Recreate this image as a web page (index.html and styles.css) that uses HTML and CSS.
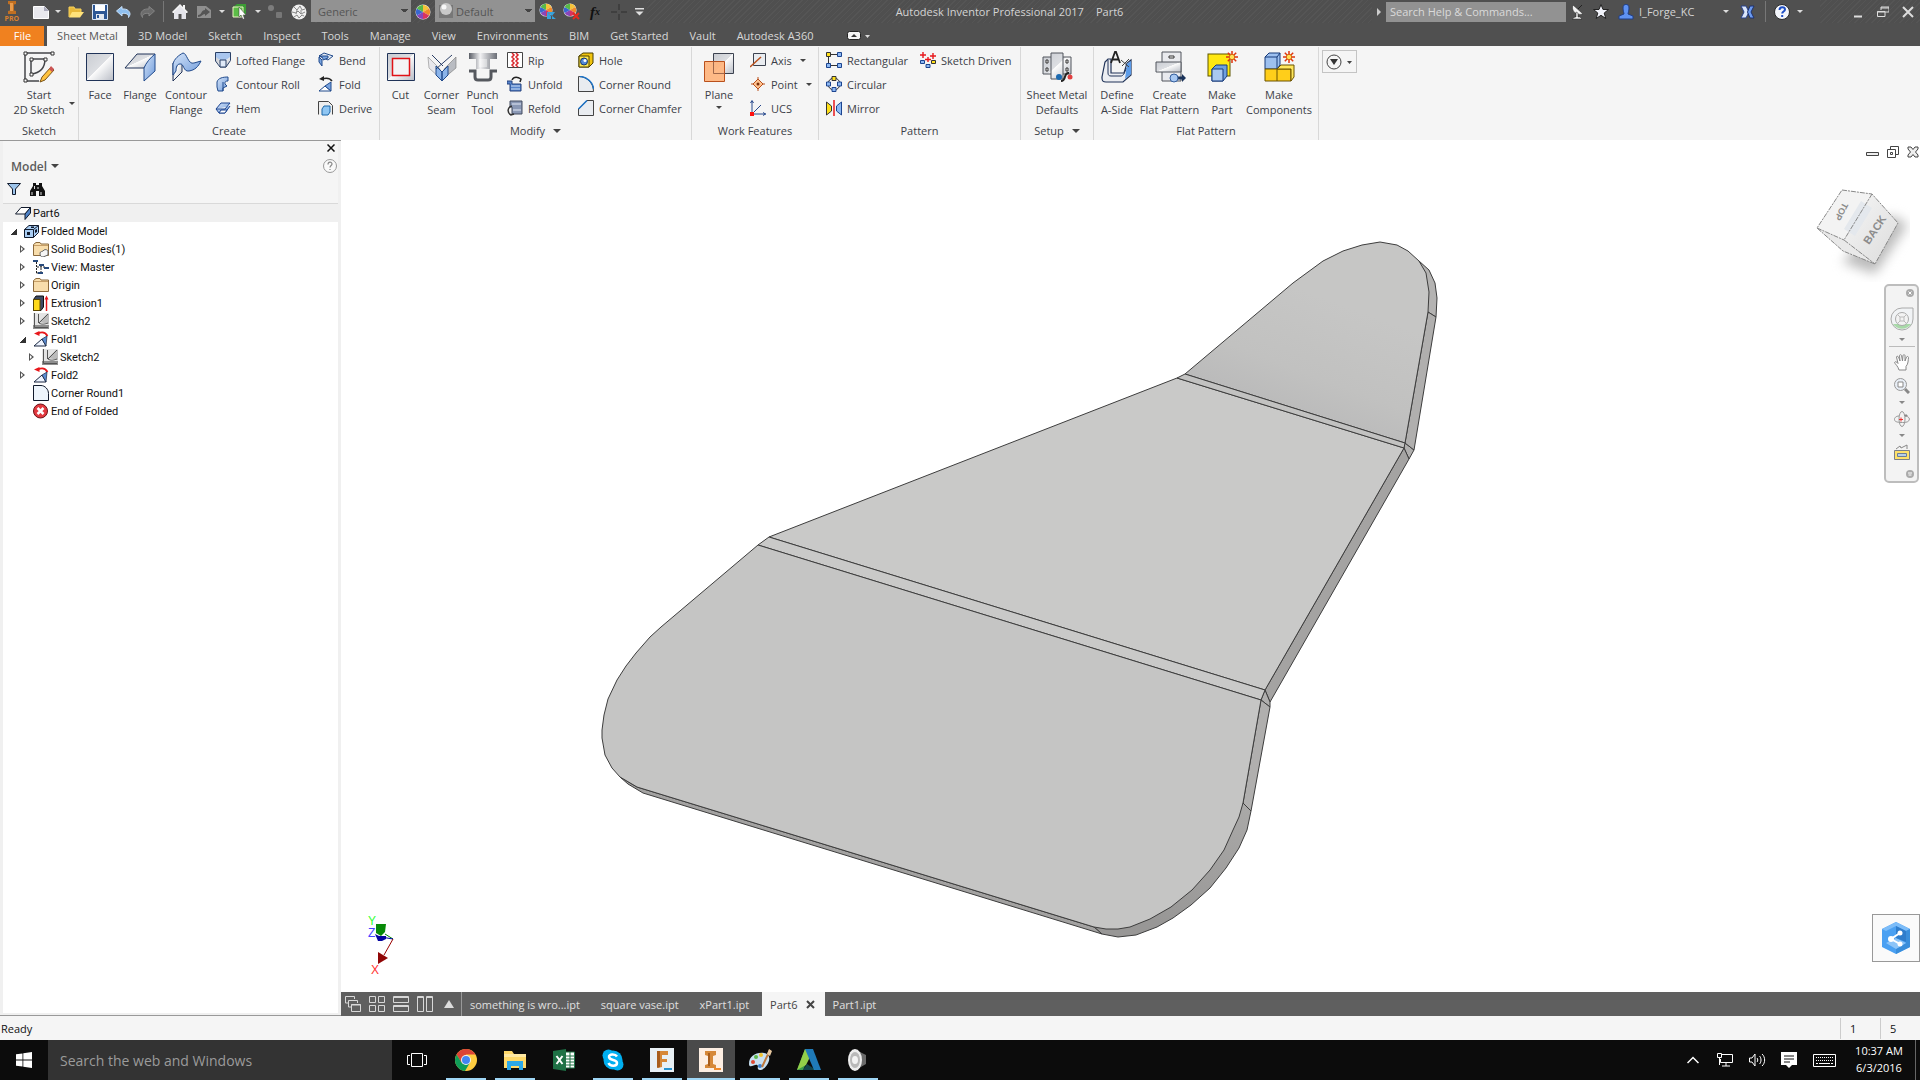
FILE: index.html
```
<!DOCTYPE html>
<html lang="en">
<head>
    <meta charset="UTF-8">
    <meta name="viewport" content="width=device-width, initial-scale=1">
    <title>Autodesk Inventor Professional 2017</title>
    <link rel="stylesheet" href="styles.css">
</head>
<body>

<!-- shared icons -->
<svg class="sprite" aria-hidden="true">
    <defs>
        <linearGradient id="g-steel" x1="0" y1="0" x2="1" y2="1">
            <stop offset="0" stop-color="#c9ccd2"/><stop offset=".48" stop-color="#dcdee2"/><stop offset=".5" stop-color="#fbfbfb"/><stop offset="1" stop-color="#b9bdc6"/>
        </linearGradient>
        <linearGradient id="g-blue" x1="0" y1="0" x2="1" y2="1">
            <stop offset="0" stop-color="#d5e4f8"/><stop offset="1" stop-color="#6f9bdb"/>
        </linearGradient>
        <linearGradient id="g-punch" x1="0" y1="0" x2="1" y2="0">
            <stop offset="0" stop-color="#5a5e66"/><stop offset=".4" stop-color="#f2f2f4"/><stop offset="1" stop-color="#6a6e76"/>
        </linearGradient>
        <linearGradient id="g-cube" x1="0" y1="0" x2="1" y2="1">
            <stop offset="0" stop-color="#f6f6f6"/><stop offset="1" stop-color="#dcdcdc"/>
        </linearGradient>
    </defs>
    <symbol id="i-wheel" viewBox="0 0 16 16">
        <circle cx="8" cy="8" r="7.5" fill="#eee"/>
        <path d="M8 8V1a7 7 0 0 1 6.1 3.5z" fill="#f6c33a"/><path d="M8 8l6.1-3.5a7 7 0 0 1 0 7z" fill="#f08a2a"/>
        <path d="M8 8l6.1 3.5A7 7 0 0 1 8 15z" fill="#d8345f"/><path d="M8 8v7a7 7 0 0 1-6.1-3.5z" fill="#8a45b8"/>
        <path d="M8 8l-6.100 3.500a7 7 0 0 1 0-7z" fill="#3867d0"/><path d="M8 8L1.900 4.500A7 7 0 0 1 8 1z" fill="#58b848"/>
    </symbol>
    <symbol id="i-foldred" viewBox="0 0 16 16">
        <path d="M14.500 5C12 .5 8 1 5 2.500" fill="none" stroke="#e8171b" stroke-width="1.800"/><path d="M1 2.500L6.500 0v5z" fill="#e8171b"/>
        <path d="M1 15h12L9 8z" fill="#eef4ff" stroke="#1a2740"/><path d="M9 8l5-3-1 10z" fill="#5a8bd0" stroke="#1a2740" stroke-width=".7"/>
    </symbol>
    <symbol id="i-sketch" viewBox="0 0 16 16">
        <path d="M0 12h16v4H0z" fill="#8f8f8f"/><path d="M0 0h16v12H0z" fill="#e4e4e4"/><path d="M6 9l8-8h2v10z" fill="#bbb"/>
        <path d="M1.500 0v14.500H15M5.500 1v9M15 1L6 10c3 2 6 1 9 0" fill="none" stroke="#555"/>
    </symbol>
    <symbol id="i-folder" viewBox="0 0 16 16">
        <path d="M.5 14.500V3.500L3 1.500h4l1 1.500h7.500v11.500z" fill="#f8ddab" stroke="#8c6a3c"/><path d="M1 4.500h14" stroke="#c79f68"/>
    </symbol>
    <symbol id="i-part" viewBox="0 0 32 32">
        <rect x="2" y="3" width="22" height="22" fill="#ffe711" stroke="#5e5600"/>
    </symbol>
    <symbol id="i-spark" viewBox="0 0 12 12">
        <path d="M6 0v12M0 6h12M1.800 1.800l8.400 8.400M10.200 1.800l-8.400 8.400" stroke="#e0350f" stroke-width="1.500"/><circle cx="6" cy="6" r="2.700" fill="#ffe25a" stroke="#d8650f"/>
    </symbol>
</svg>

<header class="titlebar">
    <div class="quick">
        <button class="app-menu" aria-label="Application menu">
            <svg width="12" height="13" viewBox="0 0 12 13"><path d="M2 0h8v3l-2 .5v6l2 .5v3H2v-3l2-.5v-6L2 3z" fill="#c06f22"/><path d="M4 2h3v8H4z" fill="#e89a4a"/></svg>
            <span>PRO</span>
        </button>
        <button aria-label="New"><svg width="16" height="14" viewBox="0 0 16 14"><path d="M.5 1.500h11L15.500 6v7.500H.5z" fill="#e9e9ee" stroke="#fff"/><path d="M11 1v5h5z" fill="#aab"/></svg></button>
        <button class="caret" aria-label="New options"></button>
        <button aria-label="Open"><svg width="16" height="14" viewBox="0 0 16 14"><path d="M1 12V2h5l1 2h6v3" fill="#e8b93a" stroke="#f7d25a"/><path d="M1 12.500L4 7h12l-4 5.500z" fill="#ffe27a"/></svg></button>
        <button aria-label="Save"><svg width="16" height="16" viewBox="0 0 16 16"><path d="M.5.5h15v15H.5z" fill="#2d5795" stroke="#d9e6f7"/><path d="M3 1h10v6H3z" fill="#fff"/><path d="M4 10h8v5H4z" fill="#e3e8f0"/><path d="M5 11h2v3H5z" fill="#2d5795"/></svg></button>
        <button aria-label="Undo"><svg width="15" height="12" viewBox="0 0 15 12"><path d="M.5 5L6 .5V3c6-.5 8 3 8 5 0 1-.5 2-1.500 3.500C13 8 10 7 6 7.500V10z" fill="#8fc0f0" stroke="#c7e0fa"/></svg></button>
        <button aria-label="Redo"><svg width="15" height="12" viewBox="0 0 15 12"><path d="M14.500 5L9 .5V3C3 2.500 1 6 1 8c0 1 .5 2 1.500 3.500C2 8 5 7 9 7.500V10z" fill="#6c6c6c" stroke="#858585"/></svg></button>
        <i class="rule"></i>
        <button aria-label="Home"><svg width="16" height="15" viewBox="0 0 16 15"><path d="M0 8L8 0l3 3V1h2v4l3 3-1 1H1z" fill="#f4f4f4"/><path d="M2 8l6-6 6 6v7H9.500v-5h-3v5H2z" fill="#e4e4ea"/></svg></button>
        <button aria-label="Update"><svg width="16" height="14" viewBox="0 0 16 14"><path d="M1 1h9l5 4v8H1z" fill="#8f8f8f"/><path d="M2 10c4 0 3-5 7-5V3l5 4-5 4V9c-3 0-3 3-7 3z" fill="#555"/></svg></button>
        <button class="caret" aria-label="Update options"></button>
        <button aria-label="Select"><svg width="15" height="17" viewBox="0 0 15 17"><path d="M1 4l4-3h9v10l-3 3H1z" fill="#3c9c35"/><path d="M1 4h10v10H1z" fill="#5cbc47" stroke="#f0f3c6"/><path d="M7 4v10l2-2 2 4.500 1.500-1L11 12h3z" fill="#fff" stroke="#333" stroke-width=".5"/></svg></button>
        <button class="caret" aria-label="Select options"></button>
        <button aria-label="Return"><svg width="16" height="16" viewBox="0 0 16 16"><circle cx="4" cy="4" r="3" fill="#7d7d7d"/><rect x="9" y="8" width="6" height="6" rx="1" fill="#777"/></svg></button>
        <button aria-label="Material browser"><svg width="16" height="16" viewBox="0 0 16 16"><circle cx="8" cy="8" r="7.500" fill="#f0f0f0"/><path d="M3 3l3 3 3-4 2 4 3-1M1 8l4 1 2-2 3 3 4-2M3 13l3-2 2 3 3-3 2 1M6 6l-1 4M10 6v4" fill="none" stroke="#888"/></svg></button>
    </div>
    <select class="dark-select" aria-label="Material"><option>Generic</option></select>
    <button class="plain" aria-label="Appearance"><svg width="16" height="16"><use href="#i-wheel"/></svg></button>
    <span class="select-wrap">
        <svg width="15" height="15" viewBox="0 0 15 15"><path d="M0 2h14v13H0z" fill="#777"/><circle cx="7" cy="6" r="6" fill="#c8c8c8"/><circle cx="5" cy="4" r="2.500" fill="#f7f7f7"/></svg>
        <select class="dark-select has-ball" aria-label="Appearance override"><option>Default</option></select>
    </span>
    <div class="quick-end">
        <button aria-label="Adjust appearance"><svg width="17" height="17" viewBox="0 0 17 17"><use href="#i-wheel" width="14" height="14"/><path d="M8 9h8l-3 4v3h4M8 16h4v-3L8 9" fill="#36a3dd"/></svg></button>
        <button aria-label="Clear appearance"><svg width="17" height="17" viewBox="0 0 17 17"><use href="#i-wheel" width="14" height="14"/><path d="M10 10l6 6M16 10l-6 6" stroke="#e62b1e" stroke-width="2"/></svg></button>
        <button class="fx" aria-label="Parameters">f<sub>x</sub></button>
        <button aria-label="Center"><svg width="16" height="16" viewBox="0 0 16 16"><path d="M8 0v6M8 10v6M0 8h6M10 8h6" stroke="#3a3a3a" stroke-width="1.500"/></svg></button>
        <button class="customize" aria-label="Customize toolbar"><svg width="9" height="8" viewBox="0 0 9 8"><path d="M0 0h9v1.500H0zM.5 3.500h8l-4 4z" fill="#e0e0e0"/></svg></button>
    </div>
    <div class="caption"><span>Autodesk Inventor Professional 2017</span><span>Part6</span></div>
    <div class="infocenter">
        <button class="expand" aria-label="Hide search"><svg width="4" height="8" viewBox="0 0 4 8"><path d="M0 0l4 4-4 4z" fill="#ccc"/></svg></button>
        <input type="text" aria-label="Search help" placeholder="Search Help &amp; Commands...">
        <button aria-label="Communication center"><svg width="13" height="16" viewBox="0 0 13 16"><path d="M2 1C0 6 4 12 12 10z" fill="#f2f2f2" stroke="#222" stroke-width=".5"/><path d="M7 5l4-4" stroke="#222"/><path d="M1 15h10l-2-2H7V9L5 8v5H4z" fill="#f2f2f2" stroke="#222" stroke-width=".5"/></svg></button>
        <button aria-label="Favorites"><svg width="16" height="16" viewBox="0 0 16 16"><path d="M8 .5l2 5h5.500l-4.300 3.500 1.600 5.500L8 11.300l-4.800 3.200 1.600-5.500L.5 5.500H6z" fill="#f1f3fa" stroke="#222"/></svg></button>
        <button class="account"><svg width="16" height="16" viewBox="0 0 16 16"><path d="M5 4c0-5 6-5 6 0 0 3-1 5-1 6l5 2v3H1v-3l5-2C6 9 5 7 5 4z" fill="#5f92f2" stroke="#203e85"/></svg><span>I_Forge_KC</span></button>
        <button class="caret" aria-label="Account menu"></button>
        <button class="exchange" aria-label="Exchange"><svg width="15" height="14" viewBox="0 0 15 14"><path d="M1 1h5l3 6-3 6H1l3-6z" fill="#dbe6fa" stroke="#27408a"/><path d="M14 1h-4L7.500 7l2.500 6h4l-3-6z" fill="#6c9bf0" stroke="#1c3170"/></svg></button>
        <i class="rule"></i>
        <button aria-label="Help"><svg width="16" height="16" viewBox="0 0 16 16"><circle cx="8" cy="8" r="7.500" fill="#f4f6fb" stroke="#2b2b2b"/><path d="M5.500 6c0-4 5.500-3.500 5.500-.5C11 7.500 8.200 7.500 8.200 9.500" fill="none" stroke="#1e4ec4" stroke-width="2"/><path d="M7.200 11h2v2h-2z" fill="#1e4ec4"/></svg></button>
        <button class="caret" aria-label="Help menu"></button>
    </div>
    <div class="window-buttons">
        <button aria-label="Minimize"><svg width="12" height="12" viewBox="0 0 12 12"><path d="M2 10.500h8" stroke="#ddd" stroke-width="2"/></svg></button>
        <button aria-label="Restore"><svg width="12" height="12" viewBox="0 0 12 12"><path d="M4 4V1h8v5H8M4 2h8M.5 5.500h7.500v5H.5zM0 6h8" stroke="#ddd" fill="none"/></svg></button>
        <button aria-label="Close"><svg width="12" height="12" viewBox="0 0 12 12"><path d="M1 1l10 10M11 1L1 11" stroke="#ddd" stroke-width="2"/></svg></button>
    </div>
</header>

<nav class="tabs">
    <button class="tab file">File</button>
    <button class="tab active">Sheet Metal</button>
    <button class="tab">3D Model</button>
    <button class="tab">Sketch</button>
    <button class="tab">Inspect</button>
    <button class="tab">Tools</button>
    <button class="tab">Manage</button>
    <button class="tab">View</button>
    <button class="tab">Environments</button>
    <button class="tab">BIM</button>
    <button class="tab">Get Started</button>
    <button class="tab">Vault</button>
    <button class="tab">Autodesk A360</button>
    <button class="collapse" aria-label="Collapse ribbon"><svg width="24" height="10" viewBox="0 0 24 10"><rect x=".5" y=".5" width="13" height="8" rx="2" fill="#f2f2f2" stroke="#222"/><path d="M4 6l3-3 3 3z" fill="#333"/><path d="M18 4h5l-2.500 3z" fill="#ddd"/></svg></button>
</nav>

<section class="ribbon">
    <div class="panel p-sketch">
        <div class="panel-body">
            <button class="big">
                <svg width="32" height="32" viewBox="0 0 32 32"><path d="M2 2h28M2 2v28h14M8 8h14M8 8v15M22 8c0 9-5 14-14 15" fill="none" stroke="#44464a" stroke-width="1.500"/><path d="M1 1h3v3H1zM28 1h3v3h-3zM1 28h3v3H1zM7 7h3v3H7zM21 7h3v3h-3zM7 22h3v3H7z" fill="#fff" stroke="#333"/><path d="M17 31l2-5 9-10 3 3-9 10z" fill="#ffc23d" stroke="#7a5418"/><path d="M26 18l2-3 3 3-2 3z" fill="#c55"/></svg>
                <span>Start<br>2D Sketch</span>
            </button>
            <i class="down side"></i>
        </div>
        <h2>Sketch</h2>
    </div>
    <div class="panel p-create">
        <div class="panel-body">
            <button class="big"><svg width="32" height="32" viewBox="0 0 32 32"><path d="M2.500 2.500h27v27h-27z" fill="url(#g-steel)" stroke="#203358"/></svg><span>Face</span></button>
            <button class="big"><svg width="32" height="32" viewBox="0 0 32 32"><path d="M1 17L13 3h18L20 17z" fill="url(#g-steel)" stroke="#203358"/><path d="M20 17c2-5 6-10 11-14v17L20 30z" fill="url(#g-blue)" stroke="#204a8c"/></svg><span>Flange</span></button>
            <button class="big wide"><svg width="32" height="32" viewBox="0 0 32 32"><path d="M3 12l9-9v18L3 30z" fill="url(#g-steel)" stroke="#203358"/><path d="M3 13C4 8 9 4 13 2c4 0 5 12 11 10l7-2c-3 6-6 9-12 10-6 1-5-8-9-7-3 0-4 3-4 7l-3 4z" fill="url(#g-blue)" stroke="#204a8c"/></svg><span>Contour<br>Flange</span></button>
            <div class="col c-create1">
                <button class="small"><svg width="16" height="16" viewBox="0 0 16 16"><path d="M.5.5h15v8L11 15H5L.5 9z" fill="url(#g-steel)" stroke="#2a4067"/><path d="M1 1h14v4l-4 3H5L1 5z" fill="#a9c6ef"/><path d="M5 8h6v7H5z" fill="#dfe9f7" stroke="#2a4067"/></svg>Lofted Flange</button>
                <button class="small"><svg width="16" height="16" viewBox="0 0 16 16"><path d="M2 6C3 2 8 1 13 1v4c-3 0-3 1-3 3l2 2-4 2v3H3l-1-4z" fill="url(#g-blue)" stroke="#204a8c"/><path d="M8 6v9" stroke="#204a8c"/></svg>Contour Roll</button>
                <button class="small"><svg width="16" height="16" viewBox="0 0 16 16"><path d="M1 9l5-6h9l-5 6zM1 9l3 4h6l5-7" fill="url(#g-blue)" stroke="#1c4490"/><path d="M4 13h6l2-3H6z" fill="#fff" stroke="#1c4490"/></svg>Hem</button>
            </div>
            <div class="col">
                <button class="small"><svg width="16" height="16" viewBox="0 0 16 16"><path d="M1 4l5-3 9 3-5 4z" fill="#e6ecf5" stroke="#204a8c"/><path d="M1 4c3 0 4 2 4 4l5-2V4zM1 5v5l3 4V8z" fill="#78a3df" stroke="#204a8c"/></svg>Bend</button>
                <button class="small"><svg width="16" height="16" viewBox="0 0 16 16"><path d="M14 5C11 1 7 2 4 3" fill="none" stroke="#222" stroke-width="1.500"/><path d="M1 3l5-3v5z" fill="#222"/><path d="M1 15h12L7 10z" fill="#fff" stroke="#204a8c"/><path d="M7 10l6-4v9z" fill="#78a3df" stroke="#204a8c"/></svg>Fold</button>
                <button class="small"><svg width="16" height="16" viewBox="0 0 16 16"><path d="M.5 14.500V1.500h10l4 4v9" fill="#eee" stroke="#444"/><path d="M4 9l2-3h6v6l-2 3H4z" fill="#8fc6f3" stroke="#1b66a8"/></svg>Derive</button>
            </div>
        </div>
        <h2>Create</h2>
    </div>
    <div class="panel p-modify">
        <div class="panel-body">
            <button class="big"><svg width="32" height="32" viewBox="0 0 32 32"><path d="M2.500 2.500h27v27h-27z" fill="url(#g-steel)" stroke="#203358"/><path d="M7.500 7.500h17v17h-17z" fill="#f4f4f6" stroke="#e01217" stroke-width="1.500"/></svg><span>Cut</span></button>
            <button class="big"><svg width="32" height="32" viewBox="0 0 32 32"><path d="M2 6l12 12v9L3 17z" fill="#e8e8ec" stroke="#888" stroke-width=".6"/><path d="M30 6L18 18v9l12-10z" fill="#b9bcc2" stroke="#777" stroke-width=".6"/><path d="M10 15l6 6v9l-6-6zM22 15l-6 6v9l6-6z" fill="#8bb4ea" stroke="#204a8c"/><path d="M6 4l11 11M26 4L10 18" stroke="#2b3f66"/></svg><span>Corner<br>Seam</span></button>
            <button class="big"><svg width="32" height="32" viewBox="0 0 32 32"><path d="M2 2h28v6H2zM9 8h14v10H9z" fill="url(#g-punch)"/><path d="M12 8h8v8h-8z" fill="#fff" opacity=".4"/><path d="M2 20h6v6c0 2 1 3 3 3h10c2 0 3-1 3-3v-6h6" fill="none" stroke="#55585e" stroke-width="3"/></svg><span>Punch<br>Tool</span></button>
            <div class="col c-modify1">
                <button class="small"><svg width="16" height="16" viewBox="0 0 16 16"><path d="M.5.5h15v15H.5z" fill="#fff" stroke="#444"/><path d="M5 1l2 2-2 2 2 2-2 2 2 2-2 2 2 2M9 1l2 2-2 2 2 2-2 2 2 2-2 2 2 2" fill="none" stroke="#d9252a" stroke-width="1.500"/></svg>Rip</button>
                <button class="small"><svg width="16" height="16" viewBox="0 0 16 16"><path d="M0 5h5v3h9v7H3V8H0z" fill="#5583cb" stroke="#26437e"/><path d="M4 10h9M4 13h9" stroke="#d0e0f6"/><path d="M5 4c2-4 6-3 9-1l-1 3" fill="none" stroke="#222" stroke-width="1.500"/></svg>Unfold</button>
                <button class="small"><svg width="16" height="16" viewBox="0 0 16 16"><path d="M3 1h12v13H5V7H3z" fill="#8a98b5" stroke="#444c60"/><path d="M5 4h9M6 10h8" stroke="#e2e8f5"/><path d="M5 6C0 7 0 13 4 15l3-1" fill="none" stroke="#333" stroke-width="1.500"/></svg>Refold</button>
            </div>
            <div class="col">
                <button class="small"><svg width="16" height="16" viewBox="0 0 16 16"><path d="M1 4l4-3h10v10l-4 4H1z" fill="#f1c40f" stroke="#4c4100"/><path d="M1 4h10v11H1z" fill="#ffe84d" stroke="#4c4100"/><circle cx="6" cy="9.500" r="3.500" fill="#5389d6" stroke="#16356e"/><circle cx="7" cy="8.500" r="1.500" fill="#fff"/></svg>Hole</button>
                <button class="small"><svg width="16" height="16" viewBox="0 0 16 16"><path d="M.5.5C9 .5 15.500 7 15.500 15.500H.5z" fill="#e9ecf0" stroke="#444"/><path d="M2 .5C9 .5 15.500 7 15.500 13" fill="none" stroke="#1d74c8" stroke-width="1.500"/></svg>Corner Round</button>
                <button class="small"><svg width="16" height="16" viewBox="0 0 16 16"><path d="M.5 15.500V9L9 .5h6.500v15z" fill="#e9ecf0" stroke="#444"/><path d="M.5 9L9 .5" stroke="#1d74c8" stroke-width="1.500"/></svg>Corner Chamfer</button>
            </div>
        </div>
        <h2>Modify <i class="down"></i></h2>
    </div>
    <div class="panel p-work">
        <div class="panel-body">
            <button class="big"><svg width="32" height="32" viewBox="0 0 32 32"><path d="M10.500 2.500h20v20h-20z" fill="url(#g-steel)" stroke="#3c4250"/><path d="M1.500 10.500h20v20h-20z" fill="#ffb37a" fill-opacity=".9" stroke="#b9501c"/><path d="M10.500 10.500v12h11" fill="none" stroke="#a0674a"/></svg><span>Plane</span><i class="down"></i></button>
            <div class="col">
                <button class="small"><svg width="16" height="16" viewBox="0 0 16 16"><path d="M3.500 1.500h12v12h-12z" fill="#e9ecf0" stroke="#3c4250"/><path d="M0 15L11 5" stroke="#b9501c" stroke-width="1.500"/></svg>Axis<i class="down"></i></button>
                <button class="small"><svg width="16" height="16" viewBox="0 0 16 16"><path d="M8 1v14M1 8h14" stroke="#b9501c"/><path d="M8 3l5 5-5 5-5-5z" fill="#ffc28f" stroke="#b9501c"/><circle cx="8" cy="8" r="1.500" fill="#7a2f0a"/></svg>Point<i class="down"></i></button>
                <button class="small"><svg width="16" height="16" viewBox="0 0 16 16"><path d="M2 1v13h14M2 14L11 5M.5 3L2 .5 3.500 3M13 12.500l2.500 1.500-2.500 1.500" fill="none" stroke="#27488c"/><path d="M0 12h4v4H0z" fill="#f11"/></svg>UCS</button>
            </div>
        </div>
        <h2>Work Features</h2>
    </div>
    <div class="panel p-pattern">
        <div class="panel-body">
            <div class="col c-pattern1">
                <button class="small"><svg width="16" height="16" viewBox="0 0 16 16"><path d="M2.500 4v8M4 2.500h8M4 13.500h8" stroke="#333"/><path d="M.5.5h4v4h-4z" fill="#ffe01a" stroke="#333"/><path d="M11.500.5h4v4h-4zM.5 11.500h4v4h-4zM11.500 11.500h4v4h-4z" fill="#8db8f2" stroke="#1c4490"/></svg>Rectangular</button>
                <button class="small"><svg width="16" height="16" viewBox="0 0 16 16"><circle cx="8" cy="8" r="6" fill="none" stroke="#333"/><path d="M6 .5h4v4H6z" fill="#ffe01a" stroke="#333"/><path d="M.5 6h4v4h-4zM11.500 6h4v4h-4zM6 11.500h4v4H6z" fill="#8db8f2" stroke="#1c4490"/></svg>Circular</button>
                <button class="small"><svg width="16" height="16" viewBox="0 0 16 16"><path d="M.5 15V2l5 4v5z" fill="#ffe01a" stroke="#333"/><path d="M15.500 15V2l-5 4v5z" fill="#8db8f2" stroke="#1c4490"/><path d="M8 0v16" stroke="#e8171b" stroke-width="1.500"/></svg>Mirror</button>
            </div>
            <div class="col">
                <button class="small"><svg width="16" height="16" viewBox="0 0 16 16"><path d="M3 0v6M0 3h6M13 1v6M10 4h6M8 5v5M5 7.500h6" stroke="#e8171b" stroke-width="1.400"/><path d="M.5 8.500h4v3h-4zM6 12.500h4v3H6z" fill="#8db8f2" stroke="#1c4490"/><path d="M11.500 8.500h4v3h-4z" fill="#ffe01a" stroke="#333"/></svg>Sketch Driven</button>
            </div>
        </div>
        <h2>Pattern</h2>
    </div>
    <div class="panel p-setup">
        <div class="panel-body">
            <button class="big"><svg width="32" height="32" viewBox="0 0 32 32"><path d="M2 6h8V2h12v4h8v17h-8v5H10v-5H2z" fill="url(#g-steel)" stroke="#50545c"/><path d="M10 6v17M22 6v17" stroke="#50545c"/><path d="M5 9h2v3H5zM5 17h2v3H5zM25 9h2v3h-2zM25 17h2v3h-2z" fill="#fff" stroke="#333"/><circle cx="18" cy="26" r="3" fill="#1c6ab0"/><circle cx="29" cy="26" r="2.500" fill="#e24040"/><path d="M20 30c6 0 2-9 8-8" fill="none" stroke="#222" stroke-width="2"/></svg><span>Sheet Metal<br>Defaults</span></button>
        </div>
        <h2>Setup <i class="down"></i></h2>
    </div>
    <div class="panel p-flat">
        <div class="panel-body">
            <button class="big"><svg width="32" height="32" viewBox="0 0 32 32"><path d="M1 26l3-15 3-3h3v14h13l3-10 4-3v15l-8 7H5c-3 0-4-1-4-4z" fill="#eceef2" stroke="#203358" stroke-width="1.200"/><path d="M26 13l4-3v13l-6 5z" fill="#5b9be8"/><path d="M7 9v13c0 2 1 3 3 3h10c2 0 4-3 5-8" fill="none" stroke="#203358"/><path d="M10 12l4-11h1l4 11M12 8.500h6" fill="none" stroke="#222" stroke-width="1.800"/><path d="M20 9l8 7M28 8l-7 7" stroke="#444"/></svg><span>Define<br>A-Side</span></button>
            <button class="big wide"><svg width="32" height="32" viewBox="0 0 32 32"><path d="M8 1h19v29H8z" fill="#e9eaee" stroke="#50545c"/><path d="M2 11h25v10H2z" fill="url(#g-steel)" stroke="#50545c"/><path d="M15 5h5v2h-5z" fill="#fff" stroke="#333"/><path d="M21 27h8" stroke="#1a3259" stroke-width="3"/><path d="M28 23l4 4-4 4z" fill="#1a3259"/><circle cx="20" cy="27" r="4" fill="#a8c8f2" stroke="#355f9e"/></svg><span>Create<br>Flat Pattern</span></button>
            <button class="big"><svg width="32" height="32" viewBox="0 0 32 32"><use href="#i-part"/><path d="M6 18l4-4h11v11l-4 5H6z" fill="#6f9fdf" stroke="#163a7a"/><path d="M6 18h11v12H6z" fill="#a9c8f1" stroke="#163a7a"/><use href="#i-spark" x="20" y="0" width="12" height="12"/></svg><span>Make<br>Part</span></button>
            <button class="big wider"><svg width="32" height="32" viewBox="0 0 32 32"><path d="M2 18V6l4-4h11v12l-3 4zM2 6h12v12M14 6l3-4" fill="#9dc0ef" stroke="#163a7a"/><path d="M2 18h26v12H2zM14 18v12" fill="#ffce1a" stroke="#6b5200"/><path d="M14 18l4-4h13v12l-3 4V18z" fill="#ffe75c" stroke="#6b5200"/><use href="#i-spark" x="20" y="0" width="12" height="12"/></svg><span>Make<br>Components</span></button>
        </div>
        <h2>Flat Pattern</h2>
    </div>
    <button class="ribbon-more" aria-label="Ribbon appearance"><svg width="28" height="16" viewBox="0 0 28 16"><circle cx="8" cy="8" r="7" fill="#f5f5f5" stroke="#444"/><path d="M4 5h8l-4 6z" fill="#333"/><path d="M21 7h5l-2.500 3z" fill="#444"/></svg></button>
</section>

<main class="workspace">
    <aside class="browser">
        <div class="browser-head">
            <button class="browser-close" aria-label="Close panel"><svg width="8" height="8" viewBox="0 0 8 8"><path d="M.5.5l7 7M7.500.5l-7 7" stroke="#111" stroke-width="1.500"/></svg></button>
            <div class="browser-title">
                <button class="model-menu">Model <i class="down"></i></button>
                <button class="help" aria-label="Help"><svg width="14" height="14" viewBox="0 0 14 14"><circle cx="7" cy="7" r="6.500" fill="#fafafa" stroke="#999"/><path d="M5 5.500c0-3 4-3 4-.5C9 6.500 7 6.500 7 8.500M7 10v1" fill="none" stroke="#888" stroke-width="1.200"/></svg></button>
            </div>
            <div class="browser-tools">
                <button aria-label="Filter"><svg width="14" height="12" viewBox="0 0 14 12"><path d="M.5.5h13L8.500 6v5.500h-3V6z" fill="#9cc3ea" stroke="#111a2c"/></svg></button>
                <button aria-label="Find"><svg width="15" height="13" viewBox="0 0 15 13"><path d="M3 0h3v2h3V0h3v3l3 5v5H9V8H6v5H0V8l3-5z" fill="#111"/><path d="M2 9v3M11 9v3M4.500 3v3M8 4v2" stroke="#ddd"/></svg></button>
            </div>
        </div>
        <ul class="tree">
            <li class="root"><svg width="16" height="13" viewBox="0 0 16 13"><path d="M.5 7L6 .5h9.500L10 7z" fill="#fff" stroke="#111a2c"/><path d="M10 7l5.500-6.500V6L10 12.500z" fill="#4f83c8" stroke="#111a2c"/></svg>Part6</li>
            <li class="l1"><i class="open"></i><svg width="15" height="13" viewBox="0 0 15 13"><path d="M.5 4.500L5 .5h9.500v7l-5 5h-9z" fill="#a9cdf3" stroke="#111a2c"/><path d="M.5 4.500h9v8M9.500 4.500l5-4" fill="none" stroke="#111a2c"/><path d="M3 7h3v3H3zM7 1.500h3v1.500H7zM11 5l2-1v3l-2 1z" fill="#111a2c"/></svg>Folded Model</li>
            <li class="l2"><i class="shut"></i><svg width="16" height="16" viewBox="0 0 16 16"><use href="#i-folder"/><path d="M7 12c0-2 3-1 4-3 1-1 4 0 4 1v4l-5 2c-2 0-3-1-3-4z" fill="#f6f6f6" stroke="#666"/></svg>Solid Bodies(1)</li>
            <li class="l2"><i class="shut"></i><svg width="16" height="16" viewBox="0 0 16 16"><path d="M3.500 3v11M3.500 14H6M8 6v8M4 8h8" fill="none" stroke="#222" stroke-dasharray="2 1"/><path d="M0 1h5v2H0zM6 5h5v2H6zM11 8h5v2h-5zM5 13h5v2H5z" fill="#274a7c"/></svg>View: Master</li>
            <li class="l2"><i class="shut"></i><svg width="16" height="16"><use href="#i-folder"/></svg>Origin</li>
            <li class="l2"><i class="shut"></i><svg width="16" height="16" viewBox="0 0 16 16"><path d="M.5 4.500L3 1h7.500v11L8 15.500H.5z" fill="#3e4a63" stroke="#111"/><path d="M.5 4.500H7v11H.5z" fill="#ffd91a" stroke="#5c4700"/><path d="M13.500 16V3" stroke="#e8171b" stroke-width="1.500"/><path d="M11.500 4.500l2-4 2 4z" fill="#e8171b"/></svg>Extrusion1</li>
            <li class="l2"><i class="shut"></i><svg width="16" height="16"><use href="#i-sketch"/></svg>Sketch2</li>
            <li class="l2"><i class="open"></i><svg width="16" height="16"><use href="#i-foldred"/></svg>Fold1</li>
            <li class="l3"><i class="shut"></i><svg width="16" height="16"><use href="#i-sketch"/></svg>Sketch2</li>
            <li class="l2"><i class="shut"></i><svg width="16" height="16"><use href="#i-foldred"/></svg>Fold2</li>
            <li class="l2"><i></i><svg width="16" height="16" viewBox="0 0 16 16"><path d="M.5.5H8c4 0 7.500 4 7.500 8v7H.5z" fill="#eef5fc" stroke="#111a2c"/></svg>Corner Round1</li>
            <li class="l2"><i></i><svg width="16" height="16" viewBox="0 0 16 16"><circle cx="7.500" cy="8" r="7" fill="#e2383f" stroke="#6d1115"/><path d="M4.500 5l6 6M10.500 5l-6 6" stroke="#fff" stroke-width="2.500"/></svg>End of Folded</li>
        </ul>
    </aside>

    <div class="stage">
        <div class="viewport">
            <svg class="part" viewBox="341 140 1579 852" aria-label="Sheet metal part">
                <defs>
                    <linearGradient id="rim" gradientUnits="userSpaceOnUse" x1="1260" y1="720" x2="1180" y2="930"><stop offset="0" stop-color="#b4b3b2"/><stop offset="1" stop-color="#989796"/></linearGradient>
                    <linearGradient id="tip" gradientUnits="userSpaceOnUse" x1="1330" y1="300" x2="1285" y2="420"><stop offset="0" stop-color="#c6c6c5"/><stop offset=".6" stop-color="#c1c1c0"/><stop offset=".95" stop-color="#bababa"/></linearGradient>
                </defs>
                <!-- edges below the top face -->
                <path class="edge" fill="url(#rim)" d="M1102 934L1118 937L1136 935L1157 927L1173 918L1191 905L1210 888L1226 868L1239 848L1247 830L1251 811L1243 803L1118 880L1094 927z"/>
                <path class="edge" fill="#b4b3b2" d="M1419 261L1429 270L1435 283L1437 298L1436 317L1428 312L1400 290z"/>
                <path class="edge" fill="#a3a2a1" d="M620 777L637 787L1094 927L1102 934L643 793L628 784z"/>
                <path class="edge" fill="#b0afae" d="M1404 448L1405 443L1414 450L1409 459z"/>
                <path class="edge" fill="#a4a3a2" d="M1404 448L1409 459L1270 702L1265 690z"/>
                <path class="edge" fill="#b0afae" d="M1428 312L1436 317L1414 450L1405 443z"/>
                <path class="edge" fill="#b0afae" d="M1261 700L1265 690L1270 702L1270 707z"/>
                <path class="edge" fill="#b0afae" d="M1261 700L1270 707L1251 811L1243 803z"/>
                <!-- top faces -->
                <path class="edge" fill="url(#tip)" d="M1185 374L1293 283L1323 261L1343 251L1362 245L1380 242L1397 245L1408 251L1419 261L1426 273L1429 292L1428 312L1405 443z"/>
                <path class="edge" fill="#c9c9c8" d="M1177 378L1404 448L1265 690L769 537z"/>
                <path class="edge" fill="#c2c2c1" d="M1185 374L1405 443L1404 448L1177 378z"/>
                <path class="edge" fill="#c9c9c8" d="M769 537L1265 690L1261 700L758 545z"/>
                <path class="edge" fill="#c5c5c4" d="M758 545L1261 700L1243 803L1239 817L1233 830L1224 850L1210 870L1192 890L1171 907L1150 919L1130 927L1118 929L1106 929L1094 927L637 787L620 777L612 768L605 755L602 738L602 730L604 715L608 699L617 680L626 666L636 653L650 637L661 627z"/>
                <!-- axis triad -->
                <path d="M393 939L385 934" stroke="#080"/><path d="M393 939L381 937" stroke="#00a"/><path d="M393 939L384 955" stroke="#900"/>
                <path d="M376 924h10l-1 8-4 4-5-3z" fill="#078a07"/><path d="M375 934l4 2h7v3l-4 2h-4z" fill="#0404a0"/><path d="M378 952l10 6-10 6z" fill="#900606"/>
                <text class="axis" x="368" y="925" fill="#3f3">Y</text><text class="axis" x="368" y="937" fill="#44f">Z</text><text class="axis" x="371" y="974" fill="#f33">X</text>
            </svg>

            <div class="doc-buttons">
                <button aria-label="Minimize document"><svg width="13" height="12" viewBox="0 0 13 12"><path d="M.5 6.500h12v3H.5z" fill="#eee" stroke="#444"/></svg></button>
                <button aria-label="Restore document"><svg width="12" height="12" viewBox="0 0 12 12"><path d="M3.500 3V.5h8v8H9M.5 3.500h8v8h-8zM3.500 6.500h2v2h-2z" fill="none" stroke="#444"/></svg></button>
                <button aria-label="Close document"><svg width="12" height="12" viewBox="0 0 12 12"><path d="M1 1h3l2 2.500L8 1h3v2L8.500 6 11 9v2H8L6 8.500 4 11H1V9l2.500-3L1 3z" fill="#eee" stroke="#444"/></svg></button>
            </div>

            <svg class="viewcube" viewBox="1810 182 100 100" aria-label="View cube">
                <path class="cube-shadow" d="M1842 262L1875 274L1908 224L1890 215z"/>
                <path d="M1842 190L1872 194L1844 240L1817 228z" fill="#f3f3f3"/><path d="M1872 194L1898 223L1875 264L1844 240z" fill="url(#g-cube)"/><path d="M1817 228L1844 240L1875 264L1843 251z" fill="#e9e9e9"/>
                <path d="M1861 201l11 7-17 28-11-7z" fill="#e4e8ed"/>
                <path d="M1842 190L1872 194L1898 223L1875 264L1843 251L1817 228zM1872 194L1844 240L1875 264M1817 228L1844 240" fill="none" stroke="#888" stroke-dasharray="5 1 2 1"/>
                <text class="face top" transform="translate(1843 202) rotate(118)">TOP</text>
                <text class="face" transform="translate(1869 245) rotate(-56)">BACK</text>
            </svg>

            <div class="navbar">
                <button class="end" aria-label="Close navigation bar"><svg width="8" height="8" viewBox="0 0 8 8"><circle cx="4" cy="4" r="4" fill="#aaa"/><path d="M2.500 2.500l3 3M5.500 2.500l-3 3" stroke="#fff"/></svg></button>
                <button aria-label="Steering wheel"><svg width="24" height="24" viewBox="0 0 24 24"><path d="M12 1h11v11A11 11 0 1 1 12 1z" fill="#f1f3f5" stroke="#aaa"/><path d="M3 17h18a11 11 0 0 1-18 0z" fill="#a8d8a8"/><circle cx="12" cy="12" r="6.500" fill="#f3f3f3" stroke="#aaa"/><path d="M8 8l2 2M16 8l-2 2M8 16l2-2M16 16l-2-2M10 10h4v4h-4z" fill="none" stroke="#bbb"/></svg></button>
                <i class="nav-down"></i>
                <hr>
                <button aria-label="Pan"><svg width="16" height="17" viewBox="0 0 16 17"><path d="M5 16C4 12 1 10 .5 8.500 1 7 3 8 4 9.500L2.500 3c0-1 1.500-1 2 0L6 7 5.500 1.500c0-1 2-1 2 0L8.500 7 9 1.500c0-1 2-1 2 0V7l1.500-4c.5-1 2-.5 2 .5-.5 3 0 6-2.500 9V16z" fill="#fff" stroke="#888"/></svg></button>
                <button aria-label="Zoom"><svg width="16" height="16" viewBox="0 0 16 16"><circle cx="6.500" cy="6.500" r="6" fill="#e8eef6" stroke="#999"/><path d="M4 4h5v5H4z" fill="#fff" stroke="#888"/><path d="M11 11l4 4" stroke="#888" stroke-width="3"/></svg></button>
                <i class="nav-down"></i>
                <button aria-label="Orbit"><svg width="16" height="16" viewBox="0 0 16 16"><ellipse cx="8" cy="8" rx="3" ry="7.500" fill="none" stroke="#999"/><path d="M5 5c-3 0-5 2-4.500 4 .5 2 4 2.500 8 2.500S15 11 15.500 8C15 6 13 5 11 5" fill="none" stroke="#999"/><path d="M7 6.500v4M5 8.500h4" stroke="#e33"/><path d="M12 3v3M10.500 4.500h3" stroke="#888"/></svg></button>
                <i class="nav-down"></i>
                <button aria-label="Look at"><svg width="16" height="16" viewBox="0 0 16 16"><path d="M.5 6.500h15v9H.5z" fill="#ffe169" stroke="#7b7f88"/><path d="M3.500 9.500h9v3h-9z" fill="#b8cfe8" stroke="#6a7d99"/><path d="M2 5l4-3 1 2 6-3v4" fill="none" stroke="#888"/></svg></button>
                <button class="end last" aria-label="Navigation bar options"><svg width="8" height="8" viewBox="0 0 8 8"><circle cx="4" cy="4" r="4" fill="#aaa"/><path d="M2 3h4M2.500 5h3" stroke="#fff"/></svg></button>
            </div>

            <button class="share" aria-label="Share"><svg width="28" height="32" viewBox="0 0 28 32"><path d="M14 0l14 7v18l-14 7L0 25V7z" fill="#4aa0f2"/><path d="M14 0l14 7-4 2-10-5L4 9 0 7z" fill="#7cbcf8"/><path d="M28 7v18l-14 7v-5l10-6V9z" fill="#3a8edb"/><path d="M4 21l10-5 10 5-10 6z" fill="#8cc4f8"/><path d="M14 4l10 5v11l-10-4z" fill="#2f7dcc"/><path d="M18 11l-9 6 9 5" fill="none" stroke="#fff" stroke-width="2"/><circle cx="18" cy="11" r="2.500" fill="#fff"/><circle cx="9" cy="17" r="3" fill="#fff"/><circle cx="18" cy="22" r="2.500" fill="#fff"/></svg></button>
        </div>

        <div class="doc-tabs">
            <div class="arrange">
                <button aria-label="Cascade"><svg width="16" height="16" viewBox="0 0 16 16"><path d="M3 7H.5V.5h9V3M6 11H3.500V4.500h9V7M6.500 8.500h9v7h-9zM6 9h10" fill="none" stroke="#d8d8d8"/></svg></button>
                <button aria-label="Tile"><svg width="16" height="16" viewBox="0 0 16 16"><path d="M.5.5h6v6h-6zM9.500.5h6v6h-6zM.5 9.500h6v6h-6zM9.500 9.500h6v6h-6z" fill="none" stroke="#d8d8d8"/></svg></button>
                <button aria-label="Tile horizontally"><svg width="16" height="16" viewBox="0 0 16 16"><path d="M.5.5h15v6H.5zM.5 9.500h15v6H.5zM0 1.500h16M0 10.500h16" fill="none" stroke="#d8d8d8"/></svg></button>
                <button aria-label="Tile vertically"><svg width="16" height="16" viewBox="0 0 16 16"><path d="M.5.5h6v15h-6zM9.500.5h6v15h-6zM0 1.500h7M9 1.500h7" fill="none" stroke="#d8d8d8"/></svg></button>
                <button aria-label="Open documents"><svg width="16" height="16" viewBox="0 0 16 16"><path d="M3 12l5-8 5 8z" fill="#ddd"/></svg></button>
            </div>
            <button class="doc">something is wro...ipt</button>
            <button class="doc">square vase.ipt</button>
            <button class="doc">xPart1.ipt</button>
            <button class="doc current">Part6 <svg width="9" height="9" viewBox="0 0 9 9"><path d="M1 1l7 7M8 1L1 8" stroke="#444" stroke-width="2"/></svg></button>
            <button class="doc">Part1.ipt</button>
        </div>
    </div>
</main>

<footer class="status"><span class="ready">Ready</span><span class="cell">1</span><span class="cell">5</span></footer>

<div class="taskbar">
    <button class="start" aria-label="Start"><svg width="16" height="16" viewBox="0 0 16 16"><path d="M0 2.300L6.500 1.400v6.200H0zM7.300 1.300L16 0v7.600H7.300zM0 8.400h6.500v6.200L0 13.700zM7.300 8.400H16V16l-8.700-1.300z" fill="#fff"/></svg></button>
    <input class="search" type="text" aria-label="Search" placeholder="Search the web and Windows">
    <div class="apps">
        <button aria-label="Task view"><svg width="20" height="14" viewBox="0 0 20 14"><path d="M4.500.5h11v13h-11zM3 2.500H.5v9H3M17 2.500h2.500v9H17" fill="none" stroke="#fff"/></svg></button>
        <button class="run" aria-label="Chrome"><svg width="22" height="22" viewBox="0 0 22 22"><circle cx="11" cy="11" r="11" fill="#ffcd40"/><path d="M1.500 5.500A11 11 0 0 1 20.500 5.500H11L6.500 14z" fill="#db4437"/><path d="M1.500 5.500A11 11 0 0 0 10 22l5-8.500H6.500z" fill="#0f9d58"/><circle cx="11" cy="11" r="5" fill="#f1f1f1"/><circle cx="11" cy="11" r="4" fill="#4285f4"/></svg></button>
        <button class="run" aria-label="File Explorer"><svg width="22" height="20" viewBox="0 0 22 20"><path d="M0 1h8l2 3h12v14H0z" fill="#ffd969"/><path d="M0 4h22v3H0z" fill="#ffe9a3"/><path d="M3 11h16v9h-4v-4H7v4H3z" fill="#2ba8e8"/></svg></button>
        <button aria-label="Excel"><svg width="22" height="22" viewBox="0 0 22 22"><path d="M12 3h9.500v16H12z" fill="#fff" stroke="#1e7145"/><path d="M13 7h8M13 10h8M13 13h8M13 16h8M17 3v16" stroke="#1e7145"/><path d="M0 2l13-2v22L0 20z" fill="#1e7145"/><path d="M3.500 7l6 8M9.500 7l-6 8" stroke="#fff" stroke-width="2"/></svg></button>
        <button class="run" aria-label="Skype"><svg width="22" height="22" viewBox="0 0 22 22"><circle cx="11" cy="11" r="9.500" fill="#00aff0"/><circle cx="6.500" cy="6.500" r="6" fill="#00aff0"/><circle cx="15.500" cy="15.500" r="6" fill="#00aff0"/><path d="M15 7.500c-2-3-8.500-2.500-8 .5.500 4 8 2 8 6 0 3.500-7 3.500-8.500 0" fill="none" stroke="#fff" stroke-width="2.500"/></svg></button>
        <button class="run" aria-label="Fusion 360"><svg width="24" height="24" viewBox="0 0 24 24"><path d="M0 0h24v24H0z" fill="#e8f0f5"/><path d="M7 3h11v4h-6v4h5v3h-5v5l-4 1z" fill="#d68838"/><path d="M7 3h3v16l-3 1z" fill="#a85d1c"/><path d="M14 20h8v2h-8z" fill="#2493d0"/></svg></button>
        <button class="run focus" aria-label="Inventor"><svg width="24" height="24" viewBox="0 0 24 24"><path d="M0 0h24v24H0z" fill="#fdeee2"/><path d="M6 3h11v4l-3 1v8l3 1v3H6v-3l3-1V8L6 7z" fill="#d68838"/><path d="M9 5h2v13H9z" fill="#a85d1c"/><path d="M15 20h7v2h-7z" fill="#ef8a2c"/></svg></button>
        <button class="run" aria-label="Paint"><svg width="24" height="24" viewBox="0 0 24 24"><path d="M1 16C1 8 8 4 16 5c7 1 6 8 3 12-3 5-8 6-9 4s1-3-1-4-8 4-8-1z" fill="#c9e1f2"/><circle cx="8" cy="9" r="2" fill="#5cb84a"/><circle cx="13" cy="7" r="2" fill="#f3c330"/><circle cx="5" cy="14" r="2" fill="#e04a33"/><circle cx="12" cy="18" r="2" fill="#3b7fd0"/><path d="M22 2l-8 17" stroke="#c17a3c" stroke-width="2"/><path d="M19 6l2-5 3 2-2 5z" fill="#e6c79f"/></svg></button>
        <button class="run" aria-label="A360"><svg width="24" height="24" viewBox="0 0 24 24"><path d="M8 1h8L6 22H0z" fill="#3c9b4c"/><path d="M8 1L0 22l9-5 6-12z" fill="#93cf49"/><path d="M8 1h8l8 21h-7z" fill="#1f7ab8"/><path d="M6 22l4-6 9 6z" fill="#1f9cae" opacity=".4"/></svg></button>
        <button class="run" aria-label="Recorder"><svg width="22" height="22" viewBox="0 0 22 22"><path d="M7 0l12 6v9L7 22z" fill="#6b6b6b"/><ellipse cx="8" cy="11" rx="7" ry="11" fill="#ededed"/><ellipse cx="8" cy="11" rx="5" ry="8" fill="#b9b9b9"/><ellipse cx="8" cy="11" rx="3" ry="4" fill="#f3f3f3"/></svg></button>
    </div>
    <div class="tray">
        <button aria-label="Show hidden icons"><svg width="12" height="8" viewBox="0 0 12 8"><path d="M.5 7L6 1.500 11.500 7" fill="none" stroke="#fff" stroke-width="1.500"/></svg></button>
        <button aria-label="Network"><svg width="16" height="14" viewBox="0 0 16 14"><path d="M5 1.500h10.500v8H3.500V6M9 10v3M5 13h8M.5.500h4v4h-4zM2.500 5v7" fill="none" stroke="#fff"/></svg></button>
        <button aria-label="Volume"><svg width="17" height="14" viewBox="0 0 17 14"><path d="M.5 5H3l3-4v12L3 9H.5z" fill="none" stroke="#fff"/><path d="M8 5c1 1 1 3 0 4M10.500 3c2 2 2 6 0 8M13 1c3.500 3 3.500 9 0 12" fill="none" stroke="#fff"/></svg></button>
        <button aria-label="Notifications"><svg width="16" height="16" viewBox="0 0 16 16"><path d="M0 0h16v13h-5l-3 3-3-3H0z" fill="#fff"/><path d="M3 4h10M3 7h10M3 10h6" stroke="#111"/></svg></button>
        <button class="keys" aria-label="Touch keyboard"><svg width="23" height="13" viewBox="0 0 23 13"><path d="M.5.5h22v12H.5z" fill="none" stroke="#fff"/><path d="M3 3.500h17M3 6.500h17" stroke="#fff" stroke-dasharray="1 1"/><path d="M3 9.500h2M6 9.500h11M18 9.500h2" stroke="#fff"/></svg></button>
        <button class="clock">10:37 AM<br>6/3/2016</button>
        <button class="desktop" aria-label="Show desktop"></button>
    </div>
</div>
</body>
</html>
```
FILE: styles.css
```
* {
    box-sizing: border-box;
}
body {
    margin: 0;
    height: 100vh;
    display: flex;
    flex-direction: column;
    overflow: hidden;
    background: #f5f5f5;
    color: #3c3f48;
    font-family: "Open Sans", "Noto Sans", sans-serif;
    font-size: 11px;
    line-height: 15px;
}
button, input, select {
    font: inherit;
    color: inherit;
    margin: 0;
    padding: 0;
    border: 0;
    background: none;
}
button {
    display: flex;
    align-items: center;
    justify-content: center;
    white-space: nowrap;
}
svg {
    display: block;
    flex: none;
}
i {
    flex: none;
}
.sprite {
    position: absolute;
    width: 0;
    height: 0;
}

/* title bar */
.titlebar {
    display: flex;
    align-items: center;
    height: 23px;
    color: #d4d4d4;
    background: repeating-linear-gradient(135deg, #4f4f4f 0, #4f4f4f 3px, #555 3px, #555 4px);
}
.titlebar > * {
    flex: none;
}
.quick {
    display: flex;
    align-items: center;
    width: 311px;
    height: 23px;
    background: #505050;
}
.quick button {
    width: 24px;
}
.quick .app-menu {
    width: 29px;
    flex-direction: column;
    gap: 1px;
    padding-right: 5px;
    color: #d9802f;
    font-size: 7px;
    font-weight: bold;
    line-height: 7px;
}
.quick .caret {
    width: 12px;
}
.caret {
    width: 12px;
}
.caret::before, .down::before {
    content: "";
    display: block;
    border: 3px solid transparent;
    border-top-color: #ddd;
    border-bottom: 0;
}
.rule {
    width: 1px;
    height: 21px;
    margin: 0 4px;
    background: #777;
}
.dark-select {
    align-self: flex-start;
    width: 100px;
    height: 22px;
    padding-left: 7px;
    appearance: none;
    border-radius: 0;
    color: #555;
    background: linear-gradient(#444, #444) 90px 9px / 7px 1px no-repeat, linear-gradient(#444, #444) 91px 10px / 5px 1px no-repeat, linear-gradient(#444, #444) 92px 11px / 3px 1px no-repeat, #929292;
}
.plain {
    width: 24px;
}
.select-wrap {
    position: relative;
    height: 22px;
    align-self: flex-start;
}
.select-wrap svg {
    position: absolute;
    left: 4px;
    top: 3px;
}
.has-ball {
    padding-left: 21px;
}
.quick-end {
    display: flex;
    align-items: center;
    height: 23px;
    background: #505050;
}
.quick-end button {
    width: 24px;
}
.quick-end .customize {
    width: 16px;
}
.quick-end .fx {
    color: #111;
    font: italic bold 15px/16px "Liberation Serif", serif;
}
.fx sub {
    font-size: 10px;
}
.titlebar .caption {
    display: flex;
    flex: 1;
    gap: 12px;
    justify-content: center;
}
.infocenter {
    display: flex;
    align-items: center;
    width: 448px;
    height: 23px;
    background: #505050;
}
.infocenter input {
    width: 180px;
    height: 20px;
    padding: 0 4px;
    background: #929292;
}
.infocenter input::placeholder {
    color: #dadada;
    opacity: 1;
}
.infocenter button {
    width: 23px;
}
.infocenter .expand, .infocenter .caret {
    width: 14px;
}
.infocenter .exchange {
    width: 28px;
}
.infocenter .account {
    width: 107px;
    gap: 5px;
    justify-content: flex-start;
    padding-left: 6px;
}
.window-buttons {
    display: flex;
    width: 100px;
    justify-content: flex-end;
    gap: 13px;
    padding-right: 6px;
}

/* ribbon tabs */
.tabs {
    display: flex;
    flex: none;
    align-items: flex-end;
    height: 23px;
    color: #d8d8d8;
    background: #505050;
}
.tab {
    height: 20px;
    padding: 0 10px 2px 11px;
}
.tab.file {
    width: 44px;
    margin-right: 3px;
    color: #fff;
    background: #f0811f;
}
.tab.active {
    width: 80px;
    color: #555;
    background: #f5f5f5;
}
.collapse {
    height: 20px;
    margin-left: 24px;
}

/* ribbon */
.ribbon {
    display: flex;
    flex: none;
    height: 94px;
    padding-top: 1px;
    background: #f5f5f5;
}
.panel {
    display: flex;
    flex-direction: column;
    border-right: 1px solid #d8d8d8;
}
.panel h2 {
    display: flex;
    align-items: center;
    justify-content: center;
    gap: 8px;
    margin: 0;
    font-size: 11px;
    font-weight: normal;
    line-height: 15px;
}
.panel-body {
    display: flex;
    height: 76px;
    padding: 1px 0 0 2px;
}
.big {
    width: 40px;
    flex-direction: column;
    justify-content: flex-start;
    gap: 4px;
    line-height: 15px;
}
.big svg {
    margin-top: 3px;
}
.wide {
    width: 52px;
}
.wider {
    width: 74px;
}
.col {
    display: flex;
    flex-direction: column;
}
.small {
    height: 24px;
    justify-content: flex-start;
    gap: 5px;
}
.small .down {
    margin-left: 3px;
}
.down::before {
    border-top-color: #444;
}
h2 .down::before {
    border-width: 4px;
    border-bottom: 0;
}
.p-sketch {
    width: 79px;
}
.p-sketch .panel-body {
    padding-left: 9px;
}
.p-sketch .big {
    width: 60px;
}
.side {
    align-self: flex-end;
    margin-bottom: 18px;
}
.p-create {
    width: 301px;
}
.p-create .panel-body {
    padding-left: 1px;
}
.c-create1 {
    width: 103px;
    margin-left: 3px;
}
.p-modify {
    width: 312px;
}
.p-modify .panel-body {
    padding-left: 0;
}
.c-modify1 {
    width: 71px;
    margin-left: 4px;
}
.p-modify .big {
    width: 41px;
}
.p-work {
    width: 127px;
}
.p-work .big {
    width: 50px;
    margin-right: 6px;
}
.p-pattern {
    width: 202px;
}
.p-pattern .panel-body {
    padding-left: 7px;
}
.c-pattern1 {
    width: 94px;
}
.p-setup {
    width: 73px;
}
.p-setup .big {
    width: 68px;
}
.p-flat {
    width: 225px;
}
.p-flat .panel-body {
    padding-left: 3px;
}
.p-flat .wide {
    width: 65px;
}
.ribbon-more {
    width: 35px;
    height: 23px;
    margin: 3px;
    border: 1px solid #c4c4c4;
}

/* browser panel */
.workspace {
    display: flex;
    flex: 1;
    min-height: 0;
}
.browser {
    display: flex;
    flex-direction: column;
    flex: none;
    width: 341px;
    padding: 0 3px 2px;
    border-top: 1px solid #999;
    border-bottom: 1px solid #999;
    background: #f0f0f0;
}
.browser-head {
    height: 63px;
    padding: 1px 1px 0 3px;
    border-bottom: 1px solid #d9d9d9;
    background: #f5f5f5;
}
.browser-close {
    width: 12px;
    height: 12px;
    margin-left: auto;
}
.browser-title {
    display: flex;
    justify-content: space-between;
    align-items: center;
    height: 24px;
    padding-left: 5px;
}
.model-menu {
    gap: 4px;
    color: #5c5c5c;
    font-size: 12px;
    font-weight: 600;
}
.model-menu .down::before {
    border-width: 4px;
    border-bottom: 0;
}
.browser-tools {
    display: flex;
    align-items: center;
    height: 22px;
    gap: 9px;
    padding-left: 1px;
}
.tree {
    flex: 1;
    margin: 0;
    padding: 0;
    list-style: none;
    background: #fff;
    color: #111;
    font-family: Roboto, "Open Sans", sans-serif;
    font-size: 11px;
}
.tree li {
    display: flex;
    align-items: center;
    height: 18px;
    gap: 2px;
}
.tree .root {
    padding-left: 12px;
    background: #f0f0f0;
}
.tree .l1 {
    padding-left: 7px;
}
.tree .l2 {
    padding-left: 16px;
}
.tree .l3 {
    padding-left: 25px;
}
.tree i {
    width: 12px;
    height: 8px;
}
.tree .open {
    background: linear-gradient(135deg, transparent 50%, #333 50%) 1px 2px / 6px 6px no-repeat;
}
.tree .shut::before {
    content: "";
    display: block;
    width: 5px;
    height: 8px;
    margin-left: 1px;
    background: #555;
    clip-path: polygon(0 0, 100% 50%, 0 100%, 0 0, 1px 2px, 1px 6px, 3px 4px, 1px 2px);
}

/* model view */
.stage {
    display: flex;
    flex-direction: column;
    flex: 1;
    min-width: 0;
}
.viewport {
    position: relative;
    flex: 1;
    min-height: 0;
    background: #fff;
}
.part {
    width: 100%;
    height: 100%;
}
.edge {
    stroke: #3d3d3d;
    stroke-width: 1;
    stroke-linejoin: round;
}
.axis {
    font: 12px "Liberation Sans", sans-serif;
}
.doc-buttons {
    position: absolute;
    top: 6px;
    right: 1px;
    display: flex;
    gap: 8px;
}
.viewcube {
    position: absolute;
    top: 42px;
    right: 10px;
    width: 100px;
    height: 100px;
}
.cube-shadow {
    fill: #bbb;
    filter: blur(6px);
}
.face {
    fill: #8c8c8c;
    font: bold 11px "Liberation Sans", sans-serif;
}
.face.top {
    font-size: 9px;
}
.navbar {
    position: absolute;
    top: 144px;
    right: 1px;
    display: flex;
    flex-direction: column;
    align-items: center;
    width: 35px;
    height: 199px;
    border: 2px solid #bdbdbd;
    border-radius: 5px;
    background: #f3f3f3;
}
.navbar button {
    margin-top: 7px;
}
.navbar .end {
    align-self: flex-end;
    margin: 3px 3px 3px 0;
}
.navbar .last {
    margin-top: auto;
}
.navbar hr {
    width: 26px;
    height: 1px;
    margin: 5px 0 0;
    border: 0;
    background: #bbb;
}
.nav-down {
    margin-top: 7px;
    border: 3px solid transparent;
    border-top-color: #888;
    border-bottom: 0;
}
.share {
    position: absolute;
    right: 0;
    bottom: 30px;
    width: 48px;
    height: 48px;
    border: 1px solid #999;
    background: #fafafa;
}

/* document tabs */
.doc-tabs {
    display: flex;
    flex: none;
    height: 24px;
    color: #e0e0e0;
    background: #5f5f5f;
}
.arrange {
    display: flex;
    gap: 8px;
    width: 121px;
    padding-left: 4px;
    border-right: 1px solid #999;
}
.doc {
    gap: 8px;
    padding: 0 13px 0 8px;
}
.doc.current {
    padding-right: 10px;
    color: #444;
    background: #f5f5f5;
}

/* status bar */
.status {
    display: flex;
    flex: none;
    height: 24px;
    padding: 2px 0 1px 1px;
    color: #111;
    line-height: 21px;
}
.ready {
    flex: 1;
}
.cell {
    width: 40px;
    padding-left: 9px;
    border-left: 1px solid #ccc;
}

/* taskbar */
.taskbar {
    display: flex;
    flex: none;
    height: 40px;
    color: #fff;
    background: #0c0c0c;
}
.start {
    width: 48px;
}
.search {
    width: 344px;
    padding: 0 12px;
    background: #333;
    font-size: 14px;
}
.search::placeholder {
    color: #9b9b9b;
    opacity: 1;
}
.apps {
    display: flex;
    flex: 1;
    gap: 1px;
    padding-left: 1px;
}
.apps button {
    width: 48px;
}
.run {
    background: linear-gradient(#9fd6f5, #9fd6f5) center bottom / 40px 2px no-repeat;
}
.run.focus {
    background: linear-gradient(#9fd6f5, #9fd6f5) center bottom / 48px 2px no-repeat, #4a4a4a;
}
.tray {
    display: flex;
}
.tray button {
    width: 32px;
}
.tray .keys {
    width: 38px;
}
.tray .clock {
    width: 72px;
    padding-bottom: 2px;
    line-height: 17px;
}
.tray .desktop {
    width: 5px;
    border-left: 1px solid #666;
}
```
